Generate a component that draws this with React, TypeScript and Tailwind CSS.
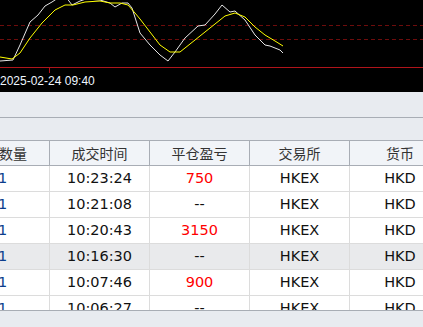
const white: [number, number][] = [
  [0, 61], [13, 60], [20, 45], [30, 22], [38, 15], [45, 6], [52, 2], [58, -2], [66, -3], [72, 5], [80, 1], [86, -1],
  [100, 0], [110, 3], [115, 7], [122, 3], [128, 3], [132, 8], [140, 33], [150, 45], [160, 55], [168, 61],
  [175, 52], [185, 38], [198, 26], [205, 25], [215, 14], [222, 5], [230, 12], [235, 11], [245, 20],
  [255, 35], [265, 45], [270, 46], [280, 50], [283, 53],
];

const yellow: [number, number][] = [
  [0, 57], [12, 59], [20, 53], [30, 38], [42, 23], [55, 10], [65, 5], [73, 5], [85, 2], [100, 1], [110, 3],
  [120, 3], [128, 5], [135, 13], [140, 19], [150, 32], [160, 45], [170, 52], [180, 52], [195, 40],
  [210, 28], [225, 16], [235, 13], [245, 17], [255, 27], [265, 35], [275, 41], [283, 46],
];

const toPoints = (pts: [number, number][]) => pts.map(([x, y]) => `${x},${y}`).join(" ");

const rows = [
  { qty: "1", time: "10:23:24", pnl: "750" },
  { qty: "1", time: "10:21:08", pnl: "--" },
  { qty: "1", time: "10:20:43", pnl: "3150" },
  { qty: "1", time: "10:16:30", pnl: "--", alt: true },
  { qty: "1", time: "10:07:46", pnl: "900" },
  { qty: "1", time: "10:06:27", pnl: "--" },
];

function Chart() {
  return (
    <div className="relative h-[92px] bg-black">
      <svg width="423" height="92" className="absolute left-0 top-0">
        <line x1="0" y1="25.5" x2="423" y2="25.5" stroke="#6e0c0c" strokeDasharray="4 3" />
        <line x1="0" y1="39.5" x2="423" y2="39.5" stroke="#6e0c0c" strokeDasharray="4 3" />
        <polyline points={toPoints(white)} fill="none" stroke="#e6e6e6" strokeWidth="1" />
        <polyline points={toPoints(yellow)} fill="none" stroke="#ffff00" strokeWidth="1" />
        <line x1="0" y1="67.5" x2="423" y2="67.5" stroke="#b0141a" />
        <line x1="49.5" y1="67" x2="49.5" y2="73" stroke="#b0141a" />
      </svg>
      <div className="absolute left-0 top-[74px] font-['Liberation_Sans',sans-serif] text-[12px] leading-[14px] text-[#eef6ff]">
        2025-02-24 09:40
      </div>
    </div>
  );
}

export default function App() {
  const cjk = "font-['Noto_Sans_CJK_SC',sans-serif]";
  const num = "font-['DejaVu_Sans',sans-serif] text-[14.5px] text-[#111]";
  return (
    <div className="h-[327px] w-[423px] overflow-hidden bg-[#e8ebf0]">
      <Chart />
      <div className="h-[26px] border-b border-[#a8adb5] bg-[#e8ebf0]" />
      <div className="h-[23px] border-b border-[#a8adb5] bg-[#e8ebf0]" />
      <div className="h-[170px] overflow-hidden border-b border-[#a8adb5] bg-white">
        <div className={`flex h-[25px] w-[500px] border-b border-[#a8adb5] bg-[#f1f4f8] text-[14px] text-[#333] ${cjk}`}>
          <div className="flex w-[50px] items-center border-r border-[#a8adb5] pl-0">
            <span className="-ml-[1px]">数量</span>
          </div>
          <div className="flex w-[100px] items-center justify-center border-r border-[#a8adb5]">成交时间</div>
          <div className="flex w-[100px] items-center justify-center border-r border-[#a8adb5]">平仓盈亏</div>
          <div className="flex w-[100px] items-center justify-center border-r border-[#a8adb5]">交易所</div>
          <div className="flex w-[100px] items-center justify-center">货币</div>
        </div>
        {rows.map((r, i) => (
          <div
            key={i}
            className={`flex h-[26px] w-[500px] border-b border-[#dcdcdc] ${r.alt ? "bg-[#e9eaec]" : "bg-white"} ${num}`}
          >
            <div className="flex w-[50px] items-center border-r border-[#dcdcdc]">
              <span className="-ml-[2px] text-[#0b3d8c]">{r.qty}</span>
            </div>
            <div className="flex w-[100px] items-center justify-center border-r border-[#dcdcdc]">{r.time}</div>
            <div
              className={`flex w-[100px] items-center justify-center border-r border-[#dcdcdc] ${r.pnl === "--" ? "" : "text-[#ff0000]"}`}
            >
              {r.pnl}
            </div>
            <div className="flex w-[100px] items-center justify-center border-r border-[#dcdcdc]">HKEX</div>
            <div className="flex w-[100px] items-center justify-center">HKD</div>
          </div>
        ))}
      </div>
    </div>
  );
}
